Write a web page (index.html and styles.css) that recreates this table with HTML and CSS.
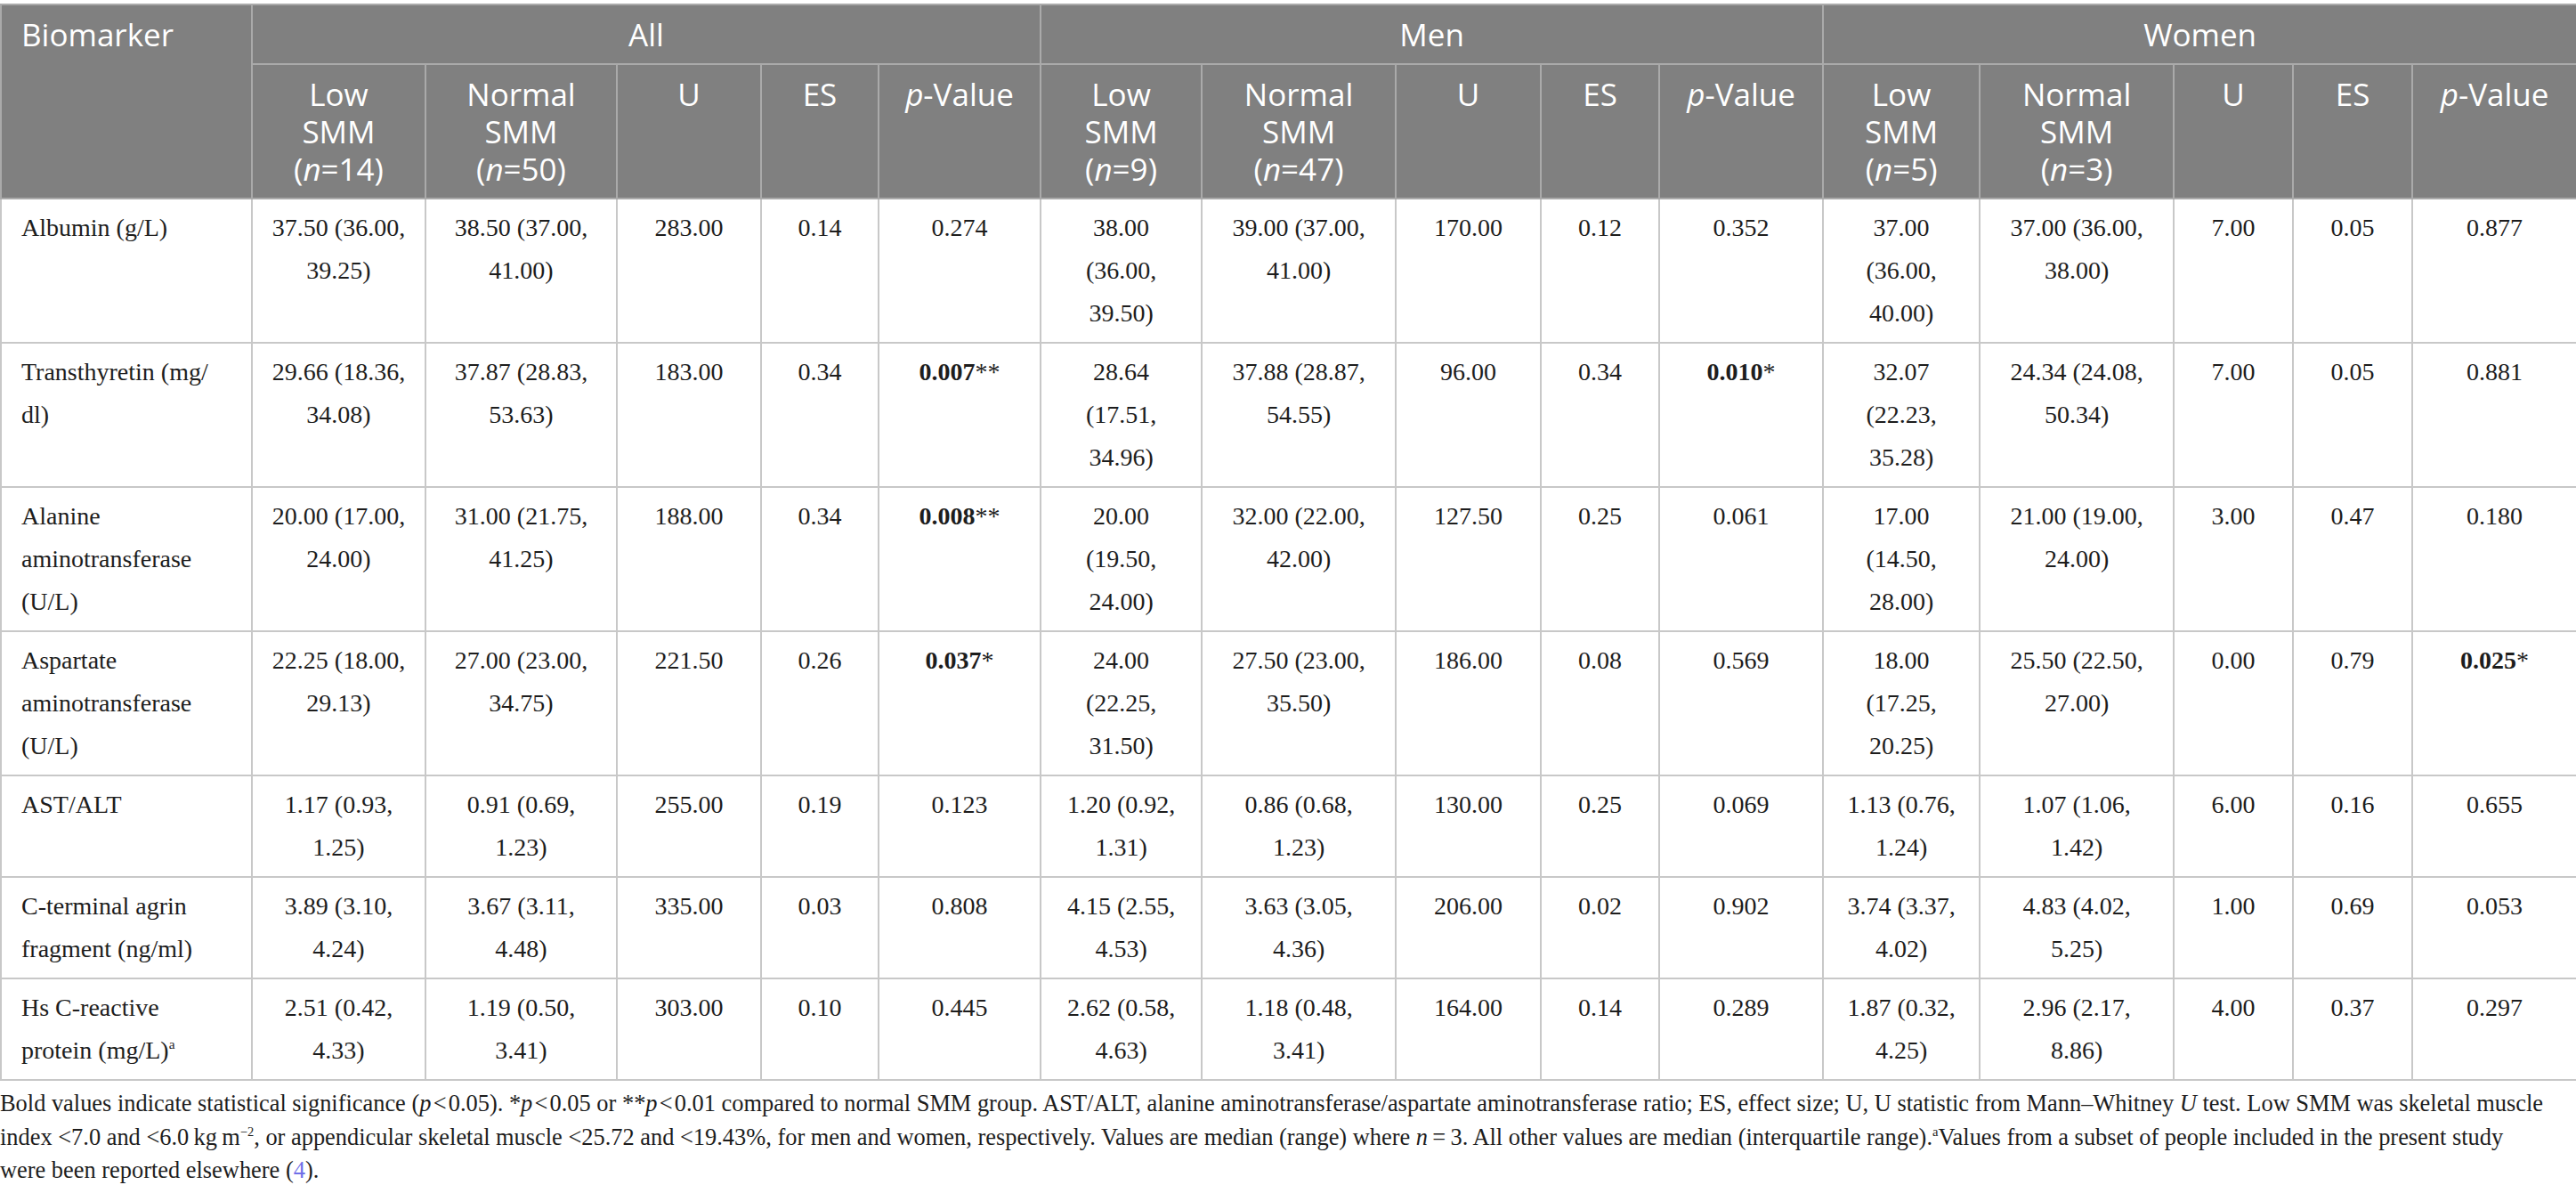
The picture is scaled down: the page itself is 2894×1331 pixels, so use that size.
FILE: index.html
```html
<!DOCTYPE html>
<html lang="en">
<head>
  <meta charset="UTF-8" />
  <title>Biomarkers by skeletal muscle mass</title>
  <link rel="stylesheet" href="styles.css">
</head>
<body>

<table class="data">
  <colgroup>
    <col style="width:282px">
    <col style="width:195px"><col style="width:215px"><col style="width:162px"><col style="width:132px"><col style="width:182px">
    <col style="width:181px"><col style="width:218px"><col style="width:163px"><col style="width:133px"><col style="width:184px">
    <col style="width:176px"><col style="width:218px"><col style="width:134px"><col style="width:134px"><col style="width:185px">
  </colgroup>
  <thead>
    <tr>
      <th rowspan="2" class="first">Biomarker</th>
      <th colspan="5">All</th>
      <th colspan="5">Men</th>
      <th colspan="5">Women</th>
    </tr>
    <tr>
      <th>Low SMM (<i>n</i>=14)</th>
      <th>Normal SMM (<i>n</i>=50)</th>
      <th>U</th>
      <th>ES</th>
      <th><i>p</i>-Value</th>
      <th>Low SMM (<i>n</i>=9)</th>
      <th>Normal SMM (<i>n</i>=47)</th>
      <th>U</th>
      <th>ES</th>
      <th><i>p</i>-Value</th>
      <th>Low SMM (<i>n</i>=5)</th>
      <th>Normal SMM (<i>n</i>=3)</th>
      <th>U</th>
      <th>ES</th>
      <th><i>p</i>-Value</th>
    </tr>
  </thead>
  <tbody>
    <tr>
      <td class="first">Albumin (g/L)</td>
      <td>37.50 (36.00, 39.25)</td><td>38.50 (37.00, 41.00)</td><td>283.00</td><td>0.14</td><td>0.274</td>
      <td>38.00 (36.00, 39.50)</td><td>39.00 (37.00, 41.00)</td><td>170.00</td><td>0.12</td><td>0.352</td>
      <td>37.00 (36.00, 40.00)</td><td>37.00 (36.00, 38.00)</td><td>7.00</td><td>0.05</td><td>0.877</td>
    </tr>
    <tr>
      <td class="first">Transthyretin (mg/<wbr>dl)</td>
      <td>29.66 (18.36, 34.08)</td><td>37.87 (28.83, 53.63)</td><td>183.00</td><td>0.34</td><td><b>0.007</b>**</td>
      <td>28.64 (17.51, 34.96)</td><td>37.88 (28.87, 54.55)</td><td>96.00</td><td>0.34</td><td><b>0.010</b>*</td>
      <td>32.07 (22.23, 35.28)</td><td>24.34 (24.08, 50.34)</td><td>7.00</td><td>0.05</td><td>0.881</td>
    </tr>
    <tr>
      <td class="first">Alanine aminotransferase (U/L)</td>
      <td>20.00 (17.00, 24.00)</td><td>31.00 (21.75, 41.25)</td><td>188.00</td><td>0.34</td><td><b>0.008</b>**</td>
      <td>20.00 (19.50, 24.00)</td><td>32.00 (22.00, 42.00)</td><td>127.50</td><td>0.25</td><td>0.061</td>
      <td>17.00 (14.50, 28.00)</td><td>21.00 (19.00, 24.00)</td><td>3.00</td><td>0.47</td><td>0.180</td>
    </tr>
    <tr>
      <td class="first">Aspartate aminotransferase (U/L)</td>
      <td>22.25 (18.00, 29.13)</td><td>27.00 (23.00, 34.75)</td><td>221.50</td><td>0.26</td><td><b>0.037</b>*</td>
      <td>24.00 (22.25, 31.50)</td><td>27.50 (23.00, 35.50)</td><td>186.00</td><td>0.08</td><td>0.569</td>
      <td>18.00 (17.25, 20.25)</td><td>25.50 (22.50, 27.00)</td><td>0.00</td><td>0.79</td><td><b>0.025</b>*</td>
    </tr>
    <tr>
      <td class="first">AST/ALT</td>
      <td>1.17 (0.93, 1.25)</td><td>0.91 (0.69, 1.23)</td><td>255.00</td><td>0.19</td><td>0.123</td>
      <td>1.20 (0.92, 1.31)</td><td>0.86 (0.68, 1.23)</td><td>130.00</td><td>0.25</td><td>0.069</td>
      <td>1.13 (0.76, 1.24)</td><td>1.07 (1.06, 1.42)</td><td>6.00</td><td>0.16</td><td>0.655</td>
    </tr>
    <tr>
      <td class="first">C-terminal agrin fragment (ng/ml)</td>
      <td>3.89 (3.10, 4.24)</td><td>3.67 (3.11, 4.48)</td><td>335.00</td><td>0.03</td><td>0.808</td>
      <td>4.15 (2.55, 4.53)</td><td>3.63 (3.05, 4.36)</td><td>206.00</td><td>0.02</td><td>0.902</td>
      <td>3.74 (3.37, 4.02)</td><td>4.83 (4.02, 5.25)</td><td>1.00</td><td>0.69</td><td>0.053</td>
    </tr>
    <tr>
      <td class="first">Hs C-reactive protein (mg/L)<sup>a</sup></td>
      <td>2.51 (0.42, 4.33)</td><td>1.19 (0.50, 3.41)</td><td>303.00</td><td>0.10</td><td>0.445</td>
      <td>2.62 (0.58, 4.63)</td><td>1.18 (0.48, 3.41)</td><td>164.00</td><td>0.14</td><td>0.289</td>
      <td>1.87 (0.32, 4.25)</td><td>2.96 (2.17, 8.86)</td><td>4.00</td><td>0.37</td><td>0.297</td>
    </tr>
  </tbody>
</table>

<p class="note">Bold values indicate statistical significance (<i>p</i>&#8202;&lt;&#8202;0.05). *<i>p</i>&#8202;&lt;&#8202;0.05 or **<i>p</i>&#8202;&lt;&#8202;0.01 compared to normal SMM group. AST/ALT, alanine aminotransferase/aspartate aminotransferase ratio; ES, effect size; U, U statistic from Mann–Whitney <i>U</i> test. Low SMM was skeletal muscle index &lt;7.0 and &lt;6.0&#8201;kg&#8201;m<sup>−2</sup>, or appendicular skeletal muscle &lt;25.72 and &lt;19.43%, for men and women, respectively. Values are median (range) where <i>n</i>&#8201;=&#8201;3. All other values are median (interquartile range).<sup>a</sup>Values from a subset of people included in the present study were&nbsp;been reported elsewhere (<a href="#ref4">4</a>).</p>

</body>
</html>
```

FILE: styles.css
```css
html, body {
  margin: 0; padding: 0;
  background: #fff; color: #1d1d1d;
  font-family: "Liberation Serif", "Times New Roman", serif;
}

.data {
  margin-top: 4px;
  width: 2894px;
  table-layout: fixed;
  border-collapse: collapse;
  border: 2px solid #c8c8c8;
}

.data th {
  background: #808080; color: #fff;
  font-family: "Open Sans", sans-serif;
  font-weight: 400; font-size: 35px; line-height: 42px;
  padding: 12px 24px 11px;
  border: 2px solid #aaaaaa;
  text-align: center; vertical-align: top;
}
.data th.first { text-align: left; padding-left: 22px; }

.data td {
  font-size: 28px; line-height: 48px;
  padding: 8px 18px;
  border: 2px solid #c8c8c8;
  text-align: center; vertical-align: top;
}
.data td.first { text-align: left; padding-left: 22px; padding-right: 24px; }

.data sup, .note sup { font-size: 0.55em; line-height: 0; vertical-align: 0.7em; }

.note {
  margin: 7px 0 0;
  font-size: 26.4px; line-height: 37.5px;
}
.note a { color: #6f6fe8; text-decoration: none; }
```
